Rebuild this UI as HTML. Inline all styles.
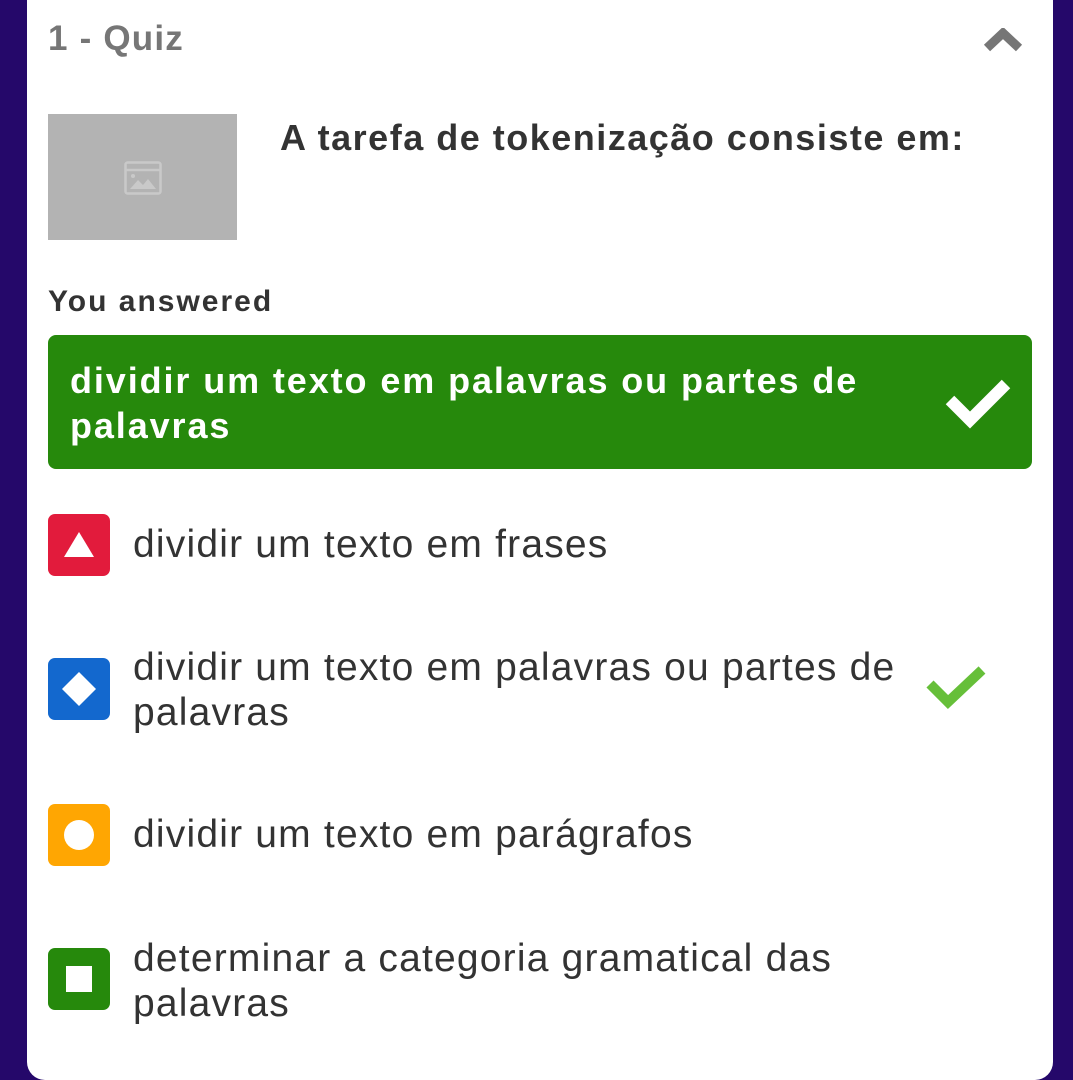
<!DOCTYPE html>
<html><head><meta charset="utf-8"><style>
body{margin:0;width:1073px;height:1060px;background:#25086a;font-family:"Liberation Sans",sans-serif;overflow:hidden;position:relative}
.card{position:absolute;left:27px;top:-20px;width:1026px;height:1100px;background:#fff;border-radius:18px}
.a{position:absolute;white-space:nowrap}
.t{color:#333;font-size:39px;letter-spacing:1.2px;line-height:45px}
.ic{position:absolute;left:48px;width:62px;height:62px;border-radius:7px}
</style></head><body>
<div class="card"></div>
<div class="a" style="left:48px;top:19px;font-size:35px;letter-spacing:1.2px;font-weight:bold;color:#767676">1 - Quiz</div>
<svg class="a" style="left:983px;top:28px" width="40" height="28" viewBox="0 0 40 28"><path d="M4 20 L20 5 L36 20" stroke="#767676" stroke-width="9" fill="none" stroke-linejoin="miter"/></svg>
<div class="a" style="left:48px;top:114px;width:189px;height:126px;background:#b3b3b3"></div>
<svg class="a" style="left:124px;top:161px" width="38" height="34" viewBox="0 0 38 34"><rect x="1.5" y="1.5" width="35" height="31" rx="2" fill="none" stroke="#c9c9c9" stroke-width="2.5"/><line x1="2" y1="9" x2="36" y2="9" stroke="#c9c9c9" stroke-width="2.5"/><path d="M6 28 L14 19 L19 24 L24 18 L32 28Z" fill="#c9c9c9"/><circle cx="9" cy="15" r="2" fill="#c9c9c9"/></svg>
<div class="a" style="left:280px;top:117px;font-size:36px;letter-spacing:1.5px;font-weight:bold;color:#333">A tarefa de tokenização consiste em:</div>
<div class="a" style="left:48px;top:285px;font-size:30px;letter-spacing:2px;font-weight:bold;color:#333">You answered</div>
<div class="a" style="left:48px;top:335px;width:984px;height:134px;background:#26890c;border-radius:8px"></div>
<div class="a" style="left:70px;top:358px;font-size:36px;letter-spacing:1.9px;line-height:45px;font-weight:bold;color:#fff">dividir um texto em palavras ou partes de<br>palavras</div>
<svg class="a" style="left:942px;top:376px" width="72" height="56" viewBox="0 0 72 56"><path d="M8 24 L28 44 L64 8" stroke="#fff" stroke-width="12" fill="none"/></svg>
<div class="ic" style="top:514px;background:#e21b3c"><svg width="62" height="62"><path d="M31 18 L46 43 L16 43Z" fill="#fff"/></svg></div>
<div class="a t" style="left:133px;top:522px">dividir um texto em frases</div>
<div class="ic" style="top:658px;background:#1368ce"><svg width="62" height="62"><path d="M31 14 L48 31 L31 48 L14 31Z" fill="#fff"/></svg></div>
<div class="a t" style="left:133px;top:645px">dividir um texto em palavras ou partes de<br>palavras</div>
<svg class="a" style="left:924px;top:664px" width="64" height="50" viewBox="0 0 64 50"><path d="M6 20 L24 38 L58 6" stroke="#66bf39" stroke-width="10" fill="none"/></svg>
<div class="ic" style="top:804px;background:#ffa602"><svg width="62" height="62"><circle cx="31" cy="31" r="15" fill="#fff"/></svg></div>
<div class="a t" style="left:133px;top:812px">dividir um texto em parágrafos</div>
<div class="ic" style="top:948px;background:#26890c"><svg width="62" height="62"><rect x="18" y="18" width="26" height="26" fill="#fff"/></svg></div>
<div class="a t" style="left:133px;top:936px">determinar a categoria gramatical das<br>palavras</div>
</body></html>
